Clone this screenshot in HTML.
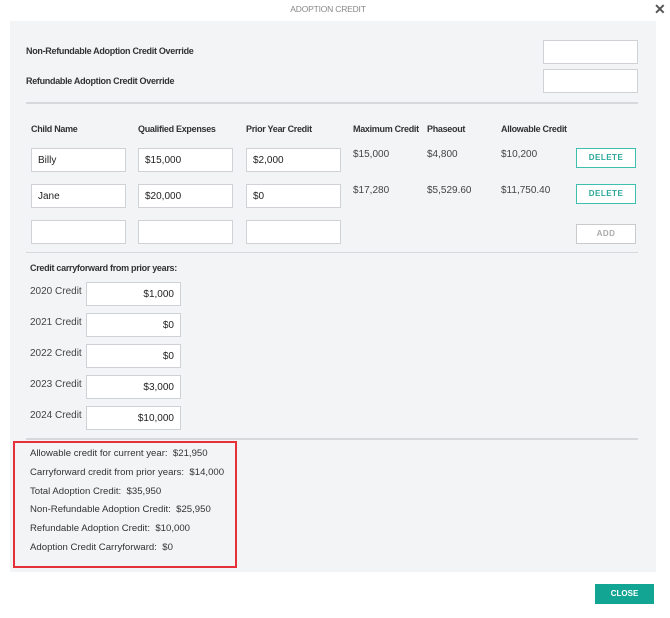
<!DOCTYPE html>
<html><head><style>
*{margin:0;padding:0;box-sizing:border-box}
body{width:670px;height:618px;background:#fff;font-family:"Liberation Sans",sans-serif;position:relative;overflow:hidden;color:#333}
.a{position:absolute}
.panel{left:10px;top:21px;width:646px;height:551px;background:#f3f4f6}
.in{position:absolute;background:#fff;border:1px solid #cfd2d6;height:24px;width:95px;font-size:10px;line-height:24px;padding:0 6px;color:#222}
.lb{font-size:9px;font-weight:bold;color:#333;letter-spacing:-0.3px}
.tx{font-size:10px;color:#444}
.hr{position:absolute;height:1px;background:#d6d8db;left:26px;width:612px}
.btn{position:absolute;width:60px;height:20px;border:1px solid #3cbfae;color:#2aa898;font-size:8px;font-weight:bold;text-align:center;line-height:18px;background:#fff;letter-spacing:.5px}
.r{text-align:right}
.s{font-size:9.6px;color:#333;position:absolute;left:30px}
</style></head><body>
<div class="a" style="left:0;top:4px;width:656px;text-align:center;font-size:8.5px;color:#888;letter-spacing:-.2px">ADOPTION CREDIT</div>
<div class="a" style="left:654px;top:1px;font-size:14px;font-weight:bold;color:#555">✕</div>
<div class="a panel"></div>
<div class="a lb" style="left:26px;top:46px">Non-Refundable Adoption Credit Override</div>
<div class="a lb" style="left:26px;top:76px">Refundable Adoption Credit Override</div>
<div class="in" style="left:543px;top:40px"></div>
<div class="in" style="left:543px;top:69px"></div>
<div class="hr" style="top:102px;height:2px"></div>
<div class="a lb" style="left:31px;top:124px">Child Name</div>
<div class="a lb" style="left:138px;top:124px">Qualified Expenses</div>
<div class="a lb" style="left:246px;top:124px">Prior Year Credit</div>
<div class="a lb" style="left:353px;top:124px">Maximum Credit</div>
<div class="a lb" style="left:427px;top:124px">Phaseout</div>
<div class="a lb" style="left:501px;top:124px">Allowable Credit</div>
<div class="in" style="left:31px;top:148px">Billy</div>
<div class="in" style="left:138px;top:148px">$15,000</div>
<div class="in" style="left:246px;top:148px">$2,000</div>
<div class="a tx" style="left:353px;top:149px">$15,000</div>
<div class="a tx" style="left:427px;top:149px">$4,800</div>
<div class="a tx" style="left:501px;top:149px">$10,200</div>
<div class="btn" style="left:576px;top:148px">DELETE</div>
<div class="in" style="left:31px;top:184px">Jane</div>
<div class="in" style="left:138px;top:184px">$20,000</div>
<div class="in" style="left:246px;top:184px">$0</div>
<div class="a tx" style="left:353px;top:185px">$17,280</div>
<div class="a tx" style="left:427px;top:185px">$5,529.60</div>
<div class="a tx" style="left:501px;top:185px">$11,750.40</div>
<div class="btn" style="left:576px;top:184px">DELETE</div>
<div class="in" style="left:31px;top:220px"></div>
<div class="in" style="left:138px;top:220px"></div>
<div class="in" style="left:246px;top:220px"></div>
<div class="btn" style="left:576px;top:224px;border-color:#c8cacd;color:#aaa">ADD</div>
<div class="hr" style="top:252px"></div>
<div class="a lb" style="left:30px;top:263px">Credit carryforward from prior years:</div>
<div class="a tx" style="left:30px;top:286px">2020 Credit</div>
<div class="in r" style="left:86px;top:282px">$1,000</div>
<div class="a tx" style="left:30px;top:317px">2021 Credit</div>
<div class="in r" style="left:86px;top:313px">$0</div>
<div class="a tx" style="left:30px;top:348px">2022 Credit</div>
<div class="in r" style="left:86px;top:344px">$0</div>
<div class="a tx" style="left:30px;top:379px">2023 Credit</div>
<div class="in r" style="left:86px;top:375px">$3,000</div>
<div class="a tx" style="left:30px;top:410px">2024 Credit</div>
<div class="in r" style="left:86px;top:406px">$10,000</div>
<div class="hr" style="top:438px;height:2px"></div>
<div class="a" style="left:13px;top:441px;width:224px;height:127px;border:2px solid #e53238"></div>
<div class="s" style="top:448px">Allowable credit for current year:&nbsp; $21,950</div>
<div class="s" style="top:467px">Carryforward credit from prior years:&nbsp; $14,000</div>
<div class="s" style="top:486px">Total Adoption Credit:&nbsp; $35,950</div>
<div class="s" style="top:504px">Non-Refundable Adoption Credit:&nbsp; $25,950</div>
<div class="s" style="top:523px">Refundable Adoption Credit:&nbsp; $10,000</div>
<div class="s" style="top:542px">Adoption Credit Carryforward:&nbsp; $0</div>
<div class="a" style="left:595px;top:584px;width:59px;height:20px;background:#12a594;color:#fff;font-size:8px;font-weight:bold;text-align:center;line-height:20px">CLOSE</div>
</body></html>
